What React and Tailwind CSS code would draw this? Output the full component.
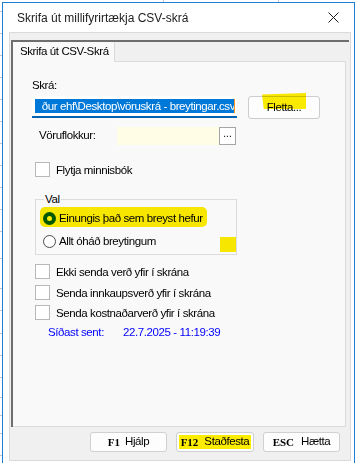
export default function App() {
  const marks = [11, 33, 55, 77, 99, 121, 143, 165, 187, 209, 231, 258, 288, 310, 333, 355, 377, 397, 415, 433, 455];
  const Check = ({ label, className = "" }) => (
    <div className={"ml-[3px] h-[15px] flex items-center gap-[6px] " + className}>
      <div className="w-[15px] h-[15px] border border-[#b8b8b8] bg-white" />
      <span className="leading-[14px]">{label}</span>
    </div>
  );
  return (
    <div className="w-[357px] h-[463px] bg-white overflow-hidden relative pl-[2px] pt-[2px] font-['Liberation_Sans',Arial,sans-serif] text-[11.5px] tracking-[-0.4px] text-black">
      {marks.map((y) => (
        <div key={y} className="absolute left-0 w-[2px] h-[1px] bg-[#c9c9c9]" style={{ top: y }} />
      ))}
      <div className="absolute top-0 left-[163px] w-[1px] h-[2px] bg-[#c9c9c9]" />
      <div className="absolute top-0 left-[278px] w-[1px] h-[2px] bg-[#c9c9c9]" />

      <div className="w-[353px] h-[470px] border-l border-t border-r border-[#1a7fd4] bg-white flex flex-col">
        <div className="h-[29px] flex items-center justify-between pl-[14px] pr-[15px]">
          <span className="text-[12px] tracking-normal text-[#1b1b1b]">Skrifa út millifyrirtækja CSV-skrá</span>
          <svg width="11" height="11" viewBox="0 0 11 11">
            <path d="M0.5 0.5L10.5 10.5M10.5 0.5L0.5 10.5" stroke="#1b1b1b" strokeWidth="1" />
          </svg>
        </div>

        <div className="ml-[6px] w-[342px] h-[429px] border border-[#dadada] bg-[#f0f0f0] flex flex-col">
          <div className="mt-[7px] ml-[1px] w-[338px] h-[387px] border-t-2 border-l-2 border-[#6e6e6e] flex flex-col">
            <div className="h-[20px] flex shrink-0">
              <div className="w-[102px] bg-[#f9f9f9] border-r border-[#d9d9d9] pl-[7px] flex items-center">Skrifa út CSV-Skrá</div>
              <div className="w-[231px] border-b border-[#dcdcdc]" />
            </div>

            <div className="w-[333px] flex-1 bg-[#f9f9f9] border-r border-b border-[#dcdcdc] pl-[19px] flex flex-col">
              <div className="mt-[16px] h-[14px] leading-[14px]">Skrá:</div>

              <div className="mt-[4px] flex items-start">
                <div className="w-[205px] h-[22px] bg-white border-b-2 border-[#0063b1] pl-[3px] pt-[3px] flex">
                  <div className="relative w-[200px] h-[14px] bg-[#0078d7] text-white overflow-hidden flex justify-end whitespace-nowrap leading-[14px]">
                    <span>{"ður ehf\\Desktop\\vöruskrá - breytingar.csv"}</span>
                    <span className="absolute right-0 top-0 w-[1px] h-full bg-[#f7941d]" />
                  </div>
                </div>
                <div className="relative ml-[11px] w-[72px] h-[23px] rounded-[3px] border border-[#cccccc] bg-[#fdfdfd] flex items-center justify-center">
                  Fletta...
                  <span className="absolute left-[13px] top-[-4px] w-[44px] h-[16px] bg-[#fcec00] mix-blend-multiply [clip-path:polygon(0_10%,100%_0,100%_100%,4%_100%)]" />
                </div>
              </div>

              <div className="mt-[8px] h-[18px] flex">
                <div className="w-[85px] pl-[7px] flex items-center">Vöruflokkur:</div>
                <div className="w-[102px] h-[18px] bg-[#fffde6]" />
                <div className="w-[17px] h-[18px] border border-[#a5a5a5] bg-white flex items-start justify-center leading-[12px] text-[10px] tracking-normal">...</div>
              </div>

              <Check label="Flytja minnisbók" className="mt-[17px]" />

              <div className="relative mt-[22px] ml-[3px] w-[202px] h-[56px] border border-[#dcdcdc] pt-[11px] flex flex-col">
                <span className="absolute left-[8px] top-[-8px] px-[1px] bg-[#f9f9f9] leading-[14px]">Val</span>
                <div className="h-[14px] flex items-center">
                  <div className="ml-[7px] w-[13px] h-[13px] rounded-full bg-[#005fb8] flex items-center justify-center">
                    <div className="w-[5px] h-[5px] rounded-full bg-white" />
                  </div>
                  <span className="ml-[3px] leading-[14px]">Einungis það sem breyst hefur</span>
                </div>
                <div className="mt-[9px] h-[14px] flex items-center">
                  <div className="ml-[7px] w-[13px] h-[13px] rounded-full border border-[#4a4a4a] bg-white" />
                  <span className="ml-[3px] leading-[14px]">Allt óháð breytingum</span>
                </div>
                <span className="absolute left-[4px] top-[7px] w-[167px] h-[20px] rounded-[5px] bg-[#fcec00] mix-blend-multiply" />
                <span className="absolute left-[184px] top-[37px] w-[16px] h-[15px] bg-[#fcec00] mix-blend-multiply" />
              </div>

              <Check label="Ekki senda verð yfir í skrána" className="mt-[9px]" />
              <Check label="Senda innkaupsverð yfir í skrána" className="mt-[6px]" />
              <Check label="Senda kostnaðarverð yfir í skrána" className="mt-[5px]" />

              <div className="mt-[5px] ml-[16px] h-[14px] leading-[14px] flex text-[#0000ff]">
                <span className="w-[75px]">Síðast sent:</span>
                <span>22.7.2025 - 11:19:39</span>
              </div>
            </div>
          </div>

          <div className="mt-[5px] pr-[10px] flex justify-end gap-[9px]">
            <div className="w-[77px] h-[20px] rounded-[3px] border border-[#d0d0d0] bg-[#fdfdfd] flex items-center justify-center gap-[5px]">
              <span className="font-['Liberation_Serif',serif] font-bold text-[11px] tracking-normal">F1</span>
              <span>Hjálp</span>
            </div>
            <div className="w-[78px] h-[20px] rounded-[3px] border border-[#d0d0d0] bg-[#fdfdfd] flex items-center justify-center">
              <span className="h-[14px] px-[2px] bg-[#fcec00] flex items-center gap-[6px]">
                <span className="font-['Liberation_Serif',serif] font-bold text-[11px] tracking-normal">F12</span>
                <span>Staðfesta</span>
              </span>
            </div>
            <div className="w-[77px] h-[20px] rounded-[3px] border border-[#d0d0d0] bg-[#fdfdfd] flex items-center justify-center gap-[7px]">
              <span className="font-['Liberation_Serif',serif] font-bold text-[11px] tracking-normal">ESC</span>
              <span>Hætta</span>
            </div>
          </div>
        </div>
      </div>
    </div>
  );
}
